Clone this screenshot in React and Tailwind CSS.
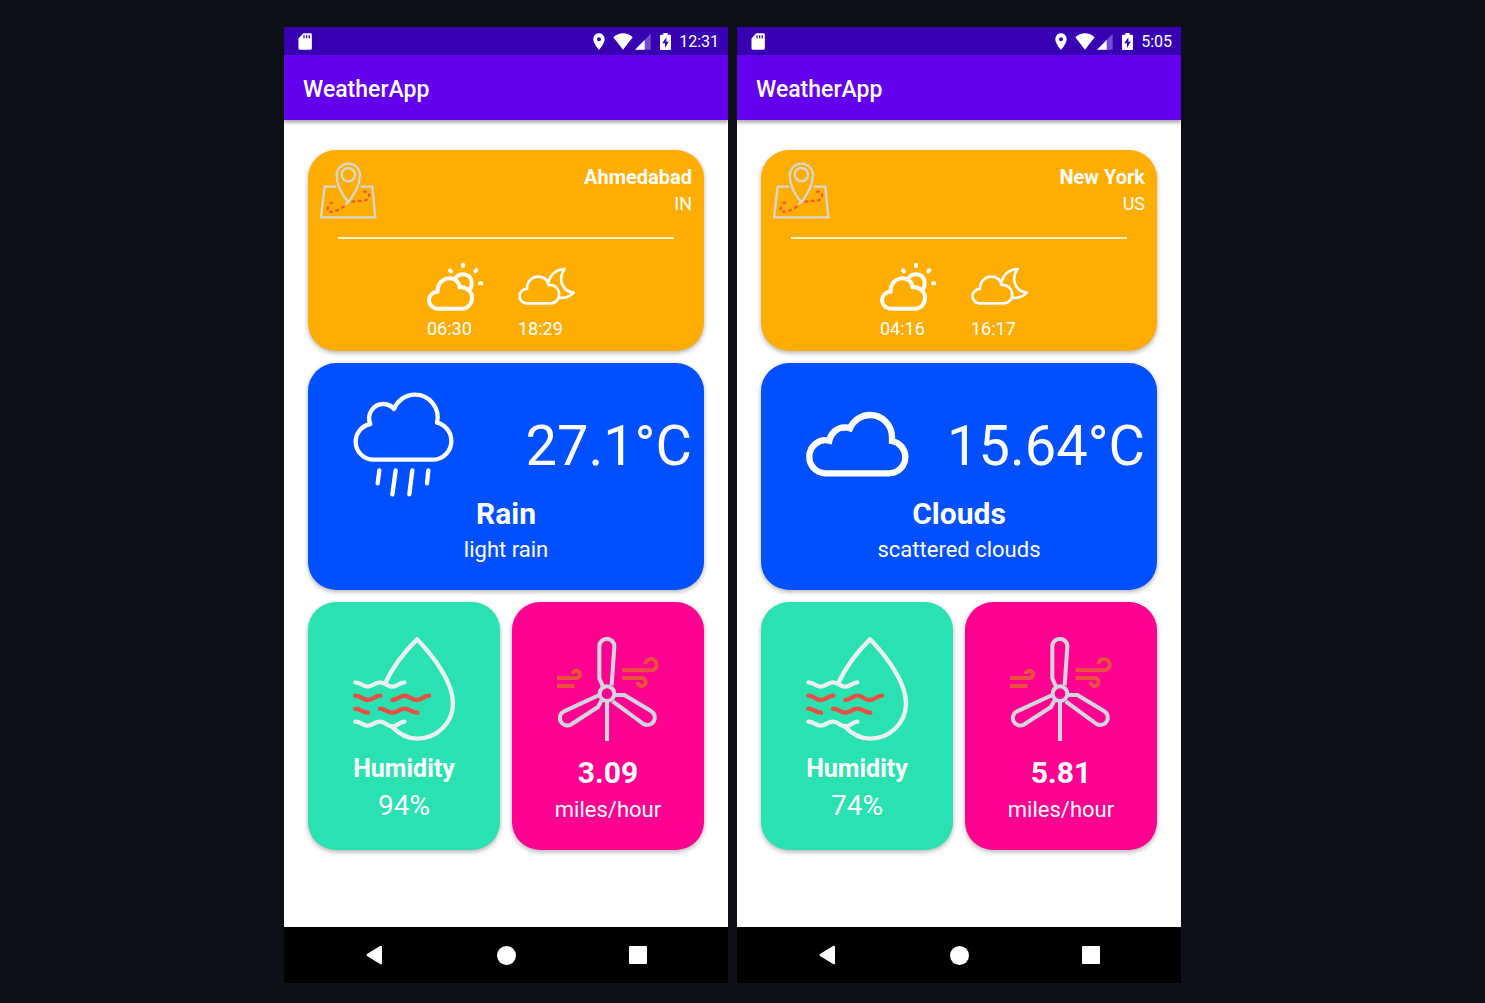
const WHITE = "#ffffff";

function StatusBar({ time }) {
  return (
    <div className="flex h-7 items-center bg-[#3800b3] pl-3.5 pr-[9px] text-white">
      <svg className="h-[17px] w-3.5" viewBox="54 38 42 52" aria-hidden="true">
        <path fill={WHITE} fillRule="evenodd" d="M70 39H92Q96 39 96 43V85Q96 89 92 89H59Q55 89 55 85V55ZM70 45V54H74V45ZM78 45V54H82V45ZM86 45V54H90V45Z" />
      </svg>
      <div className="ml-auto flex items-center">
        <svg className="h-[17px] w-3" viewBox="99 38 36 51" aria-hidden="true">
          <path fill={WHITE} fillRule="evenodd" d="M117 39C107 39 100 47 100 57C100 70 117 89 117 89S134 70 134 57C134 47 127 39 117 39ZM117 51A6 6 0 1 1 117 63A6 6 0 1 1 117 51Z" />
        </svg>
        <svg className="ml-2 h-[17px] w-5" viewBox="160 38 60 51" aria-hidden="true">
          <path fill={WHITE} d="M190 88L161 51Q174 39 190 39T219 51Z" />
        </svg>
        <svg className="ml-0.5 h-[17px] w-4" viewBox="226 38 48 51" aria-hidden="true">
          <path fill={WHITE} fillOpacity="0.3" d="M273 40V88H226Z" />
          <path fill={WHITE} d="M255 59V88H226Z" />
        </svg>
        <svg className="ml-[9px] h-[17px] w-[11px]" viewBox="300 38 33 51" aria-hidden="true">
          <path fill={WHITE} fillRule="evenodd" d="M310 38H323V43H330Q333 43 333 46V86Q333 89 330 89H303Q300 89 300 86V46Q300 43 303 43H310ZM319 51L307 69H315V83L326 64H319Z" />
        </svg>
        <span className="ml-2 pt-0.5 text-[16px] leading-[26px]">{time}</span>
      </div>
    </div>
  );
}

function MapIcon() {
  return (
    <svg className="size-[57px]" viewBox="60 66 171 171" fill="none" stroke="#d5d8cf" strokeWidth="7" aria-hidden="true">
      <path d="M109 140H74L63 232H226L217 140H182" />
      <path d="M137 193L147 184Q180 140 180 105A35 34 0 0 0 110 105Q110 145 145 187" />
      <circle cx="145" cy="104" r="20" />
      <g stroke="#ee5a35" strokeWidth="7" strokeLinecap="round">
        <path d="M92 189L96 188M84 202L83 207M91 215L95 216M109 212L114 210M126 203L131 200M157 185L163 184M176 183L182 183M195 181L200 179M207 168L207 163M198 155L192 155" />
      </g>
    </svg>
  );
}

function SunriseIcon() {
  return (
    <svg className="size-[57px]" viewBox="80 24 171 171" fill="none" stroke={WHITE} strokeWidth="12" aria-hidden="true">
      <path d="M113 176A27 26 0 0 1 86 150A26 26 0 0 1 112 125C110 75 175 73 178 112A32 32 0 0 1 188 176Z" strokeLinejoin="round" />
      <path d="M164 87C174 66 207 68 213 91Q217 108 206 122" />
      <g strokeWidth="12" strokeLinecap="round">
        <path d="M188 44V48M149 61L152 64M228 60L225 64M239 100H243" />
      </g>
    </svg>
  );
}

function SunsetIcon() {
  return (
    <svg className="size-[57px]" viewBox="353 24 171 171" fill="none" stroke={WHITE} strokeWidth="8" strokeLinejoin="round" aria-hidden="true">
      <path d="M378 160A21 21 0 0 1 380 117C379 70 441 69 444 105C484 101 488 157 452 160Z" />
      <path d="M443 97Q457 58 493 57C473 84 482 122 520 128Q502 147 476 143" />
    </svg>
  );
}

function RainIcon() {
  return (
    <svg className="size-[104px] overflow-visible" viewBox="36 36 312 312" fill="none" stroke={WHITE} strokeWidth="13" strokeLinejoin="round" aria-hidden="true">
      <path d="M101 239H280A56 56 0 0 0 334 183A56 56 0 0 0 291 128A68 68 0 0 0 225 44A68 68 0 0 0 162 87A43 43 0 0 0 131 72A43 43 0 0 0 91 132A54 54 0 0 0 47 186A54 54 0 0 0 101 239Z" />
      <path d="M118 271L113 310M167 271L157 343M217 271L208 343M265 271L261 310" strokeLinecap="round" />
    </svg>
  );
}

function CloudIcon() {
  return (
    <svg className="size-[104px] overflow-visible" viewBox="45 6 312 312" fill="none" stroke={WHITE} strokeWidth="19" aria-hidden="true">
      <path d="M107 250H297A49 49 0 0 0 346 201A49 49 0 0 0 306 153V141A66 66 0 0 0 240 75A66 66 0 0 0 180 115A48 48 0 0 0 164 112A48 48 0 0 0 118 152A49 49 0 0 0 58 201A49 49 0 0 0 107 250Z" />
    </svg>
  );
}

function HumidityIcon() {
  return (
    <svg className="size-[104px]" viewBox="36 36 312 312" fill="none" stroke="#ebeff2" strokeWidth="13" strokeLinecap="round" strokeLinejoin="round" aria-hidden="true">
      <path d="M136 174Q168 105 231 43C285 98 339 175 339 235A107 106 0 0 1 232 341Q189 341 154 303" />
      <path d="M46 172C64 172 66 185 83 185S102 172 120 172S139 185 157 185S176 172 193 172" />
      <path d="M46 290C64 290 66 302 83 302S102 290 120 290S139 304 157 304S176 290 193 290" />
      <g stroke="#e94f40">
        <path d="M46 212C64 212 66 225 83 225S104 212 121 212M157 225C175 225 176 212 193 212S212 225 230 225S250 212 267 212" />
        <path d="M46 251C64 251 66 263 84 263M120 251C138 251 139 263 157 263S176 251 193 251S214 263 232 263" />
      </g>
    </svg>
  );
}

function WindIcon() {
  return (
    <svg className="size-[104px]" viewBox="33 36 312 312" fill="none" stroke="#d0d5de" strokeWidth="12" aria-hidden="true">
      <circle cx="186" cy="206" r="22" />
      <path d="M186 228V348" />
      <path d="M174 185L163 160V64A22 22 0 0 1 208 64L200 181" />
      <path d="M163 210L57 259A22 22 0 0 0 77 299L159 246L169 227" />
      <path d="M208 210H238L318 258A22 22 0 0 1 296 297L203 229" />
      <g stroke="#e8513e">
        <path d="M232 136H318A17 17 0 1 0 301 118" />
        <path d="M232 159H289A12 12 0 1 1 278 171" />
        <path d="M36 159H94A11 11 0 1 0 83 147M36 183H89" />
      </g>
    </svg>
  );
}

const card = "rounded-[28px] text-white shadow-[0_2px_5px_rgba(0,0,0,0.3)]";

function Phone({ data }) {
  return (
    <section className="flex w-full max-w-[444px] flex-col bg-white" aria-label={data.city}>
      <StatusBar time={data.time} />
      <header className="flex h-[65px] items-center bg-[#6200ee] px-[19px] pt-1 text-white shadow-[0_3px_3px_rgba(0,0,0,0.3)]">
        <h1 className="text-[23px] leading-8 font-medium">WeatherApp</h1>
      </header>

      <main className="flex flex-col gap-3 px-6 pt-[30px] pb-[77px]">
        <article className={`${card} bg-[#ffad00] px-3 pt-3 pb-[9px]`}>
          <div className="flex items-start justify-between">
            <MapIcon />
            <div className="pt-px text-right">
              <h2 className="text-[20px] leading-7 font-bold">{data.city}</h2>
              <p className="text-[18px] leading-[26px]">{data.country}</p>
            </div>
          </div>
          <hr className="mx-[18px] mt-[18px] border-0 border-t-2 border-[#ffefcb]" />
          <div className="mt-[19px] flex justify-center gap-[34px] pr-2.5">
            <div className="flex flex-col gap-px">
              <SunriseIcon />
              <span className="text-[18px] leading-[26px]">{data.sunrise}</span>
            </div>
            <div className="flex flex-col gap-px">
              <SunsetIcon />
              <span className="text-[18px] leading-[26px]">{data.sunset}</span>
            </div>
          </div>
        </article>

        <article className={`${card} bg-[#0050ff] px-3 pt-[29px] pb-[23px]`}>
          <div className="flex items-center justify-between pl-8">
            {data.icon === "rain" ? <RainIcon /> : <CloudIcon />}
            <p className="pt-1 text-[56px] leading-[64px]">{data.temp}</p>
          </div>
          <h2 className="text-center text-[30px] leading-[35px] font-bold">{data.main}</h2>
          <p className="pt-0.5 text-center text-[22px] leading-[34px]">{data.detail}</p>
        </article>

        <div className="grid grid-cols-2 gap-3">
          <article className={`${card} flex flex-col items-center bg-[#29e1b1] pt-[35px] pb-7`}>
            <HumidityIcon />
            <h2 className="mt-2 text-[25px] leading-10 font-bold">Humidity</h2>
            <p className="pt-px text-[28px] leading-8">{data.humidity}</p>
          </article>
          <article className={`${card} flex flex-col items-center bg-[#ff0090] pt-[35px]`}>
            <WindIcon />
            <h2 className="mt-[9px] text-[30px] leading-[46px] font-bold">{data.wind}</h2>
            <p className="text-[22px] leading-7">miles/hour</p>
          </article>
        </div>
      </main>

      <nav className="grid h-14 grid-cols-3 bg-black px-6" aria-label="System">
        <button type="button" aria-label="Back" className="flex items-center justify-center">
          <svg className="h-5 w-4" viewBox="0 0 16 20" aria-hidden="true">
            <path fill={WHITE} d="M1 9Q0 10 1 11L14 19Q16 20 16 18V2Q16 0 14 1Z" />
          </svg>
        </button>
        <button type="button" aria-label="Home" className="flex items-center justify-center">
          <span className="size-[19px] rounded-full bg-white" />
        </button>
        <button type="button" aria-label="Recent apps" className="flex items-center justify-center">
          <span className="size-[18px] rounded-[1px] bg-white" />
        </button>
      </nav>
    </section>
  );
}

const phones = [
  {
    time: "12:31", city: "Ahmedabad", country: "IN", sunrise: "06:30", sunset: "18:29",
    icon: "rain", temp: "27.1°C", main: "Rain", detail: "light rain", humidity: "94%", wind: "3.09",
  },
  {
    time: "5:05", city: "New York", country: "US", sunrise: "04:16", sunset: "16:17",
    icon: "cloud", temp: "15.64°C", main: "Clouds", detail: "scattered clouds", humidity: "74%", wind: "5.81",
  },
];

export default function App() {
  return (
    <div className="flex min-h-screen items-start justify-center gap-[9px] bg-[#0d1117] pt-[27px] pr-5 pb-5 font-['Roboto',sans-serif]">
      {phones.map((p) => (
        <Phone key={p.city} data={p} />
      ))}
    </div>
  );
}
